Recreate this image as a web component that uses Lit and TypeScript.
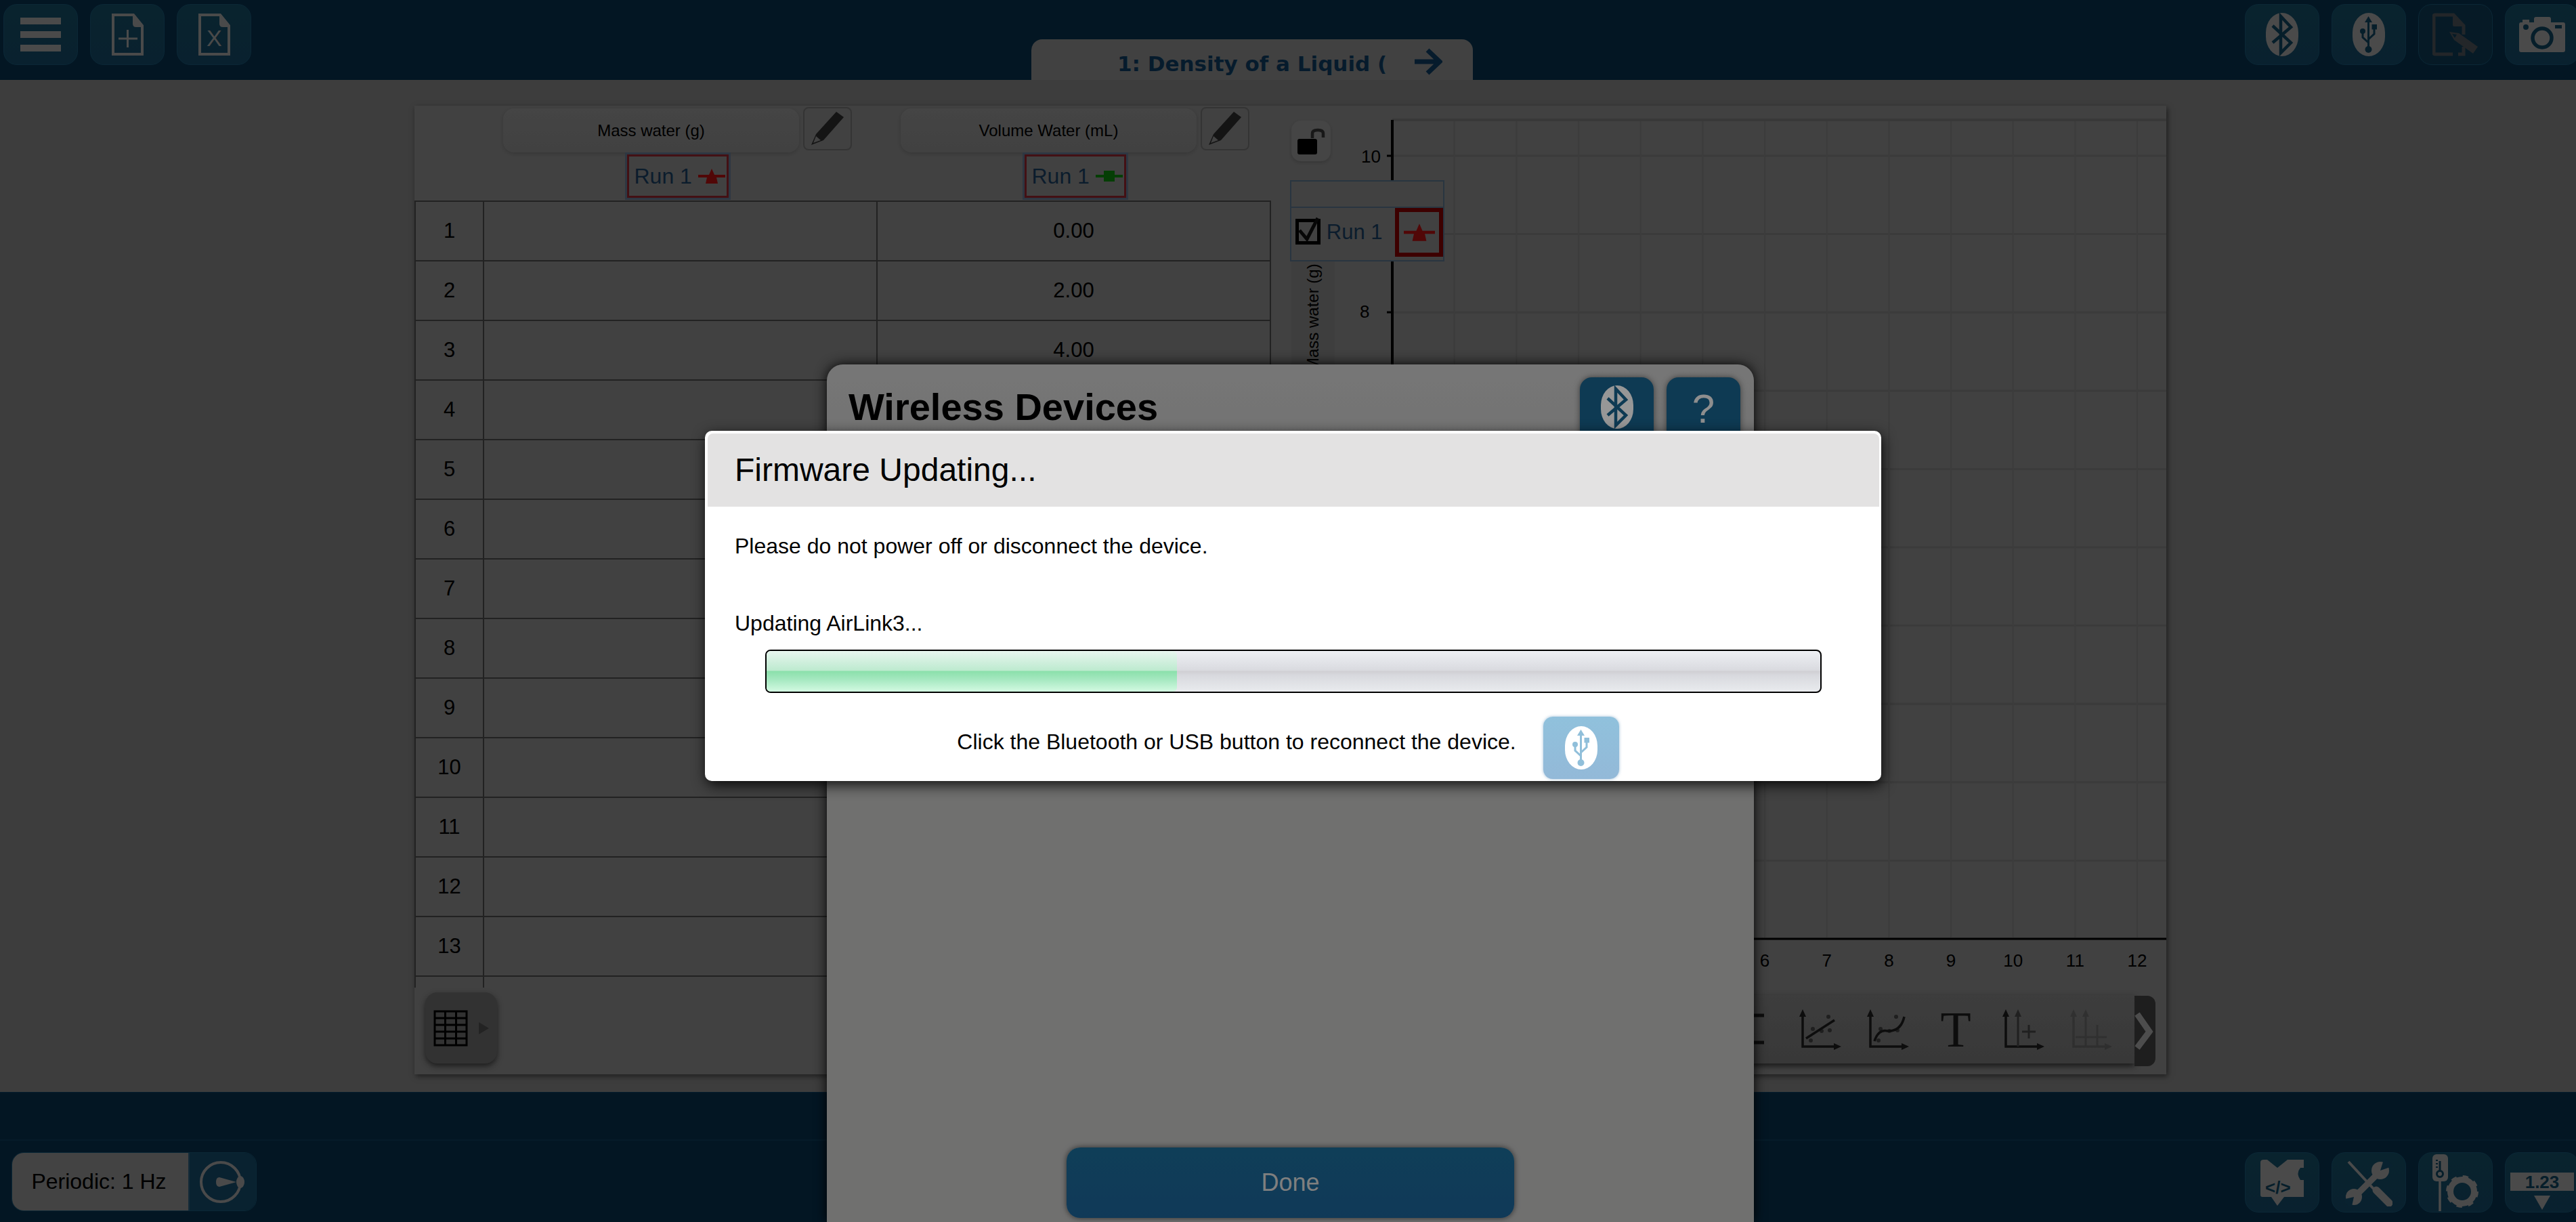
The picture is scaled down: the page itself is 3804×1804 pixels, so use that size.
import { LitElement, html, css, svg } from "lit";
import { customElement } from "lit/decorators.js";

const rows = Array.from({ length: 14 }, (_, i) => i + 1);
const values: Record<number, string> = { 1: "0.00", 2: "2.00", 3: "4.00" };
const LIGHT = "#9a9a9a";
const INK = "#0f3e58";
const BTN = "#144763";

const oval = (fill: string, glyph: unknown) => html`<svg class="oval" viewBox="0 0 48 64"><rect width="48" height="64" rx="24" ry="29" fill=${fill}></rect>${glyph}</svg>`;
const btGlyph = (c: string) => svg`<path d="M10 19 L37 44 L22 59 V5 L37 21 L10 44" fill="none" stroke=${c} stroke-width="4.5"></path>`;
const usbGlyph = (c: string) => svg`<g fill="none" stroke=${c} stroke-width="3"><path d="M23.5 10 V50"></path><path d="M15 29 V36 L23.5 44"></path><path d="M32 22 V31 L23.5 39"></path></g><path d="M23.5 5 L18 14 H29Z" fill=${c}></path><circle cx="23.5" cy="54" r="5" fill=${c}></circle><circle cx="15" cy="27" r="4" fill=${c}></circle><rect x="28.5" y="17" width="7.5" height="7.5" fill=${c}></rect>`;
const docPath = "M2 2 H32 L45 18 V60 H2 Z";
const star = (c: string) => html`<svg class="marker" viewBox="0 0 40 22"><path d="M20 0 L24 9 H40 V13 H27 L29 22 H11 L13 13 H0 V9 H16 Z" fill=${c}></path></svg>`;
const plus = (c: string) => html`<svg class="marker" viewBox="0 0 40 22"><path d="M12 3 H28 V9 H40 V13 H28 V19 H12 V13 H0 V9 H12 Z" fill=${c}></path></svg>`;
const axes = svg`<path d="M5 8 V56 H54" fill="none" stroke="currentColor" stroke-width="3.5"></path><path d="M5 1 L0 12 H10Z M62 56 L51 51 V61Z" fill="currentColor"></path>`;
const dots = svg`<g fill="currentColor" opacity=".6"><circle cx="17" cy="47" r="3"></circle><circle cx="20" cy="30" r="3"></circle><circle cx="33" cy="33" r="3"></circle><circle cx="45" cy="32" r="3"></circle><circle cx="43" cy="12" r="3"></circle></g>`;

@customElement("app-root")
export class AppRoot extends LitElement {
  static styles = css`
    :host { display: block; position: relative; width: 100vw; height: 100vh; overflow: hidden; font-family: "Liberation Sans", Arial, sans-serif; color: #000; }
    .page { display: flex; flex-direction: column; height: 100%; background: #7e7e7e; }
    .topbar { height: 118px; background: #082f4a; display: flex; flex: none; padding-left: 5px; }
    .group { display: flex; gap: 18px; padding-top: 6px; align-items: flex-start; }
    .group.right { margin-left: auto; margin-right: -5px; }
    .btn { box-sizing: border-box; width: 110px; height: 90px; display: flex; align-items: center; justify-content: center; border-radius: 20px; background: linear-gradient(#144a60, #134562); border: 1px solid #175270; }
    .btn.off { background: #0e3750; }
    .oval { width: 48px; height: 64px; display: block; }
    .tab { margin-left: 1152px; margin-top: 58px; width: 652px; height: 60px; box-sizing: border-box; background: #868686; border-radius: 16px 16px 0 0; display: flex; align-items: center; padding: 12px 0 0 127px; gap: 38px; }
    .tab span { width: 400px; overflow: hidden; white-space: nowrap; font: bold 31px "DejaVu Sans", sans-serif; color: #0f3a5c; flex: none; }
    .tab svg { width: 42px; height: 40px; flex: none; margin-top: -6px; }
    .main { flex: 1; min-height: 0; padding: 38px 605px 26px 612px; }
    .panel { display: grid; grid-template-columns: 1265px 1fr; height: 100%; background: #868686; box-shadow: 2px 3px 8px rgba(0,0,0,.5); }
    .left { display: flex; flex-direction: column; min-width: 0; }
    .head { height: 140px; flex: none; display: grid; grid-template-columns: 101px 582px 582px; }
    .col { display: grid; grid-template-columns: 437px 72px; column-gap: 6px; grid-template-rows: 70px 64px; padding-top: 2px; }
    .col.a { padding-left: 30px; }
    .col.b { padding-left: 35px; }
    .name { margin-top: 2px; height: 65px; border-radius: 16px; background: linear-gradient(#8e8e8e, #868686); box-shadow: 0 2px 5px rgba(0,0,0,.16); font-size: 24px; display: flex; align-items: center; justify-content: center; }
    .pen { height: 64px; box-sizing: border-box; border: 2px solid #6c6c6c; border-radius: 8px; }
    .pen svg { width: 68px; height: 60px; display: block; }
    .run { grid-column: 1 / 3; justify-self: center; box-sizing: border-box; width: 150px; height: 64px; border: 3px solid #8c222c; outline: 3px solid #5f7288; display: flex; align-items: center; padding-left: 8px; gap: 9px; font-size: 32px; color: #173c5c; white-space: nowrap; }
    .marker { width: 40px; height: 22px; flex: none; }
    .wrap { height: 1162px; overflow: hidden; flex: none; }
    table { border-collapse: collapse; table-layout: fixed; width: 1265px; font-size: 31px; }
    td { height: 88px; padding: 0; box-sizing: border-box; border: 2px solid #484848; text-align: center; }
    .c0 { width: 101px; }
    .tray { padding: 7px 0 0 16px; }
    .gridbtn { width: 106px; height: 105px; background: #686868; border-radius: 18px; box-shadow: 0 4px 8px rgba(0,0,0,.55); display: flex; align-items: center; padding-left: 12px; box-sizing: border-box; gap: 16px; }
    .gridbtn svg.g { width: 51px; height: 54px; }
    .gridbtn svg.t { width: 15px; height: 18px; }
    .graph { position: relative; overflow: visible; }
    .canvas { position: absolute; inset: 0; width: 100%; height: 100%; }
    .canvas text { font-family: "Liberation Sans", Arial, sans-serif; font-size: 26px; fill: #000; }
    .lock { position: absolute; left: 30px; top: 22px; width: 58px; height: 60px; border-radius: 14px; background: #8e8e8e; box-shadow: 0 2px 4px rgba(0,0,0,.16); }
    .lock svg { width: 58px; height: 60px; display: block; }
    .ylabel { position: absolute; left: 30px; top: 230px; width: 64px; height: 500px; background: #808080; writing-mode: vertical-rl; transform: rotate(180deg); display: flex; align-items: center; justify-content: flex-end; font-size: 24px; box-sizing: border-box; padding-bottom: 3px; white-space: nowrap; }
    .legend { position: absolute; left: 28px; top: 110px; width: 228px; height: 120px; box-sizing: border-box; background: #868686; border: 2px solid #566f85; }
    .legend .top { height: 37px; border-bottom: 2px solid #566f85; }
    .legend .row { display: flex; align-items: flex-start; }
    .check { width: 37px; height: 38px; box-sizing: border-box; border: 5px solid #000; margin: 16px 0 0 6px; position: relative; }
    .check svg { position: absolute; left: -5px; top: -5px; width: 37px; height: 38px; overflow: visible; }
    .legend .lbl { font-size: 31px; color: #173c5c; margin: 18px 0 0 9px; width: 102px; }
    .mbox { width: 71px; height: 72px; box-sizing: border-box; border: 6px solid #7e0000; display: flex; align-items: center; justify-content: center; }
    .mbox .marker { width: 46px; height: 26px; }
    .gtray { position: absolute; right: 47px; top: 1313px; width: 1100px; height: 101px; background: linear-gradient(#7e7e7e, #747474); box-shadow: 0 4px 8px rgba(0,0,0,.6); display: flex; justify-content: flex-end; align-items: center; padding-right: 14px; box-sizing: border-box; color: #1c1c1c; }
    .gtray .ti { width: 100px; display: flex; justify-content: center; }
    .gtray svg { width: 62px; height: 62px; display: block; }
    .gtray .T { font: 74px "Liberation Serif", serif; line-height: 62px; height: 62px; color: #1c1c1c; }
    .gtray .off { opacity: .22; }
    .handle { position: absolute; right: 16px; top: 1314px; width: 31px; height: 104px; background: #3e3e3e; border-radius: 0 12px 12px 0; display: flex; align-items: center; }
    .handle svg { width: 28px; height: 58px; }
    .bottom { height: 192px; flex: none; background: #082f4a; box-sizing: border-box; display: flex; flex-direction: column; border-top: 1px solid #0c3c5c; }
    .sep { height: 69px; flex: none; border-bottom: 2px solid #0e3a56; }
    .brow { display: flex; padding: 17px 0 0 17px; }
    .periodic { display: flex; height: 87px; width: 362px; border-radius: 18px; overflow: hidden; border: 1px solid #175270; box-sizing: border-box; }
    .periodic .t { width: 260px; background: #8a8a8a; font-size: 32px; display: flex; align-items: center; justify-content: center; flex: none; box-sizing: border-box; padding-right: 4px; }
    .periodic .i { flex: 1; background: #144763; display: flex; align-items: center; justify-content: center; border-left: 2px solid #2d5a74; }
    .periodic svg { width: 72px; height: 66px; }
    .bgroup { margin-left: auto; margin-right: -5px; display: flex; gap: 18px; }
    .bgroup .btn { height: 89px; }
    .num svg { margin-top: 26px; }
    .overlay { position: absolute; inset: 0; background: rgba(0,0,0,.3); }
    .wireless { position: absolute; left: 1221px; top: 538px; width: 1369px; height: 1266px; box-sizing: border-box; background: linear-gradient(#aaaaaa, #a1a1a0 200px); border-radius: 24px 24px 0 0; box-shadow: 0 0 18px rgba(0,0,0,.95); display: flex; flex-direction: column; }
    .whead { display: flex; padding: 19px 20px 0 32px; }
    .whead h1 { margin: 13px auto 0 0; font-size: 56px; line-height: 62px; font-weight: bold; }
    .whead .wb { display: flex; gap: 19px; }
    .wbtn { width: 109px; height: 104px; border-radius: 18px; background: #155478; box-shadow: 0 0 8px rgba(0,0,0,.5); display: flex; align-items: flex-start; justify-content: center; padding-top: 12px; box-sizing: border-box; color: #cccccc; font-size: 60px; line-height: 70px; }
    .done { margin: auto auto 6px; width: 661px; height: 104px; border-radius: 20px; background: linear-gradient(#165a7e, #18527e); box-shadow: 0 0 8px rgba(0,0,0,.6); color: #b7b7b7; font-size: 36px; display: flex; align-items: center; justify-content: center; }
    .firmware { position: absolute; left: 1041px; top: 636px; width: 1737px; height: 517px; box-sizing: border-box; background: #fff; border-radius: 10px; box-shadow: 2px 6px 20px rgba(0,0,0,.85); padding: 4px 3px 0 4px; }
    .fhead { height: 108px; background: #e3e2e2; border-radius: 8px 8px 0 0; display: flex; align-items: center; padding-left: 40px; font-size: 48px; box-sizing: border-box; padding-bottom: 2px; }
    .fbody { padding: 38px 0 0 40px; font-size: 32px; line-height: 40px; }
    .fbody .up { margin-top: 74px; }
    .bar { box-sizing: border-box; margin: 19px 0 0 45px; width: 1560px; height: 64px; border: 2.5px solid #000; border-radius: 8px; background: linear-gradient(#eef0f4, #d9dadf 48%, #cfcfd3 50%, #d8d9de 60%, #e9ebee); overflow: hidden; }
    .fill { height: 100%; background: linear-gradient(#e8f6ef, #bdeacf 48%, #8be0ab 50%, #a5e8c0 70%, #d3fae2); border-radius: 0 6px 6px 0; }
    .recon { display: flex; justify-content: center; gap: 40px; margin: 35px 56px 0 0; }
    .recon span { margin-top: 17px; }
    .usb { width: 112px; height: 92px; border-radius: 14px; background: linear-gradient(#90c1dc, #93b9d8); box-shadow: 0 0 4px rgba(100,150,190,.6); display: flex; align-items: center; justify-content: center; }
  `;

  private grid() {
    const xs = Array.from({ length: 12 }, (_, i) => 2056 + (i + 1) * 91.67);
    const ys = Array.from({ length: 11 }, (_, i) => 230 + i * 115.6);
    return html`<svg class="canvas" viewBox="1877 156 1322 1430">
      ${ys.map((y) => svg`<line x1="2056" x2="3199" y1=${y} y2=${y} stroke="#7a7a7a" stroke-width="3"></line>`)}
      ${xs.map((x) => svg`<line x1=${x} x2=${x} y1="177" y2="1387" stroke="#7c7c7c" stroke-width="2"></line>`)}
      <line x1="2056" x2="3199" y1="177" y2="177" stroke="#747474" stroke-width="4"></line>
      <line x1="2056" x2="2056" y1="177" y2="1387" stroke="#000" stroke-width="4"></line>
      <line x1="2048" x2="3199" y1="1386" y2="1386" stroke="#000" stroke-width="3"></line>
      <line x1="2048" x2="2056" y1="230" y2="230" stroke="#000" stroke-width="3"></line>
      <line x1="2048" x2="2056" y1="461" y2="461" stroke="#000" stroke-width="3"></line>
      <text x="2010" y="240">10</text><text x="2008" y="469">8</text>
      ${[6, 7, 8, 9, 10, 11, 12].map((n) => svg`<text x=${2056 + n * 91.67} y="1427" text-anchor="middle">${n}</text>`)}
    </svg>`;
  }

  render() {
    return html`
      <div class="page">
        <div class="topbar">
          <div class="group">
            <div class="btn"><svg width="60" height="50" viewBox="0 0 60 50"><path d="M0 0H60V10H0Z M0 20H60V30H0Z M0 40H60V50H0Z" fill=${LIGHT}></path></svg></div>
            <div class="btn"><svg width="47" height="62" viewBox="0 0 47 62"><path d=${docPath} fill="none" stroke=${LIGHT} stroke-width="4"></path><path d="M31 2 H34 L45 16 V20 H36 Q31 20 31 15Z" fill=${LIGHT}></path><path d="M23.5 24 V50 M10 37 H38" stroke=${LIGHT} stroke-width="3"></path></svg></div>
            <div class="btn"><svg width="47" height="62" viewBox="0 0 47 62"><path d=${docPath} fill="none" stroke=${LIGHT} stroke-width="4"></path><path d="M31 2 H34 L45 16 V20 H36 Q31 20 31 15Z" fill=${LIGHT}></path><text x="12" y="48" font-family="Liberation Sans" font-size="34" fill=${LIGHT}>X</text></svg></div>
          </div>
          <div class="tab"><span>1: Density of a Liquid (</span><svg viewBox="0 0 42 40"><path d="M1 20 H36 M20 3 L38 20 L20 37" fill="none" stroke="#0f3a5c" stroke-width="7"></path></svg></div>
          <div class="group right">
            <div class="btn">${oval(LIGHT, btGlyph(INK))}</div>
            <div class="btn">${oval(LIGHT, usbGlyph(INK))}</div>
            <div class="btn off"><svg width="68" height="64" viewBox="0 0 68 64"><path d="M30 61 H4 Q2 61 2 59 V5 Q2 3 4 3 H31 L46 19 V32 M46 50 V61 H38" fill="none" stroke="#4a5055" stroke-width="5"></path><path d="M30 3 H33 L46 17 V20 H32 Q30 20 30 18Z" fill="#4a5055"></path><path d="M25 28 L39 30 L67 50 L60 60 L32 40 Z" fill="#4a5055"></path><path d="M29 31 L36 32 L33 37 Z" fill="#0e3750"></path></svg></div>
            <div class="btn"><svg width="68" height="52" viewBox="0 0 68 52"><path d="M0 11 Q0 8 3 8 H5 V4 H15 V8 H22 V3 Q22 0 25 0 H44 Q47 0 47 3 V8 H65 Q68 8 68 11 V49 Q68 52 65 52 H3 Q0 52 0 49 Z" fill=${LIGHT}></path><circle cx="34" cy="31" r="14" fill=${LIGHT} stroke=${INK} stroke-width="5.5"></circle><rect x="53" y="12" width="10" height="5" fill=${INK}></rect><circle cx="10" cy="15" r="4" fill=${INK}></circle></svg></div>
          </div>
        </div>

        <div class="main">
          <div class="panel">
            <div class="left">
              <div class="head">
                <div></div>
                ${[["a", "Mass water (g)", star("#a81010")], ["b", "Volume Water (mL)", plus("#0c800c")]].map(
                  ([k, n, m]) => html`<div class="col ${k}">
                    <div class="name">${n}</div>
                    <div class="pen"><svg viewBox="0 0 68 60"><path d="M47 5 L58 13 L28 47 L10 54 L17 38 Z" fill="#2a2a2a"></path><path d="M17 41 L24 47 L13 51 Z" fill="#888"></path></svg></div>
                    <div class="run">Run 1 ${m}</div>
                  </div>`
                )}
              </div>
              <div class="wrap">
                <table>
                  ${rows.map((r) => html`<tr><td class="c0">${r < 14 ? r : ""}</td><td></td><td>${values[r] ?? ""}</td></tr>`)}
                </table>
              </div>
              <div class="tray">
                <div class="gridbtn">
                  <svg class="g" viewBox="0 0 51 54"><path d="M2 2H49V52H2Z M17.5 2V52 M33.5 2V52 M2 12H49 M2 22H49 M2 32H49 M2 42H49" fill="none" stroke="#000" stroke-width="3"></path></svg>
                  <svg class="t" viewBox="0 0 15 18"><path d="M0 0 L15 9 L0 18Z" fill="#4a4a4a"></path></svg>
                </div>
              </div>
            </div>

            <div class="graph">
              ${this.grid()}
              <div class="ylabel">Mass water (g)</div>
              <div class="lock"><svg viewBox="0 0 58 60"><rect x="9" y="27" width="29" height="23" rx="3" fill="#000"></rect><path d="M31 26 V19 Q31 14 39 14 Q47 14 47 19 V25" fill="none" stroke="#333" stroke-width="4.5"></path></svg></div>
              <div class="legend">
                <div class="top"></div>
                <div class="row">
                  <div class="check"><svg viewBox="0 0 37 38"><path d="M6 17 L17 30 L33 -1" fill="none" stroke="#111" stroke-width="5"></path></svg></div>
                  <div class="lbl">Run 1</div>
                  <div class="mbox">${star("#a81010")}</div>
                </div>
              </div>
              <div class="gtray">
                <div class="ti"><svg viewBox="0 0 62 62"><path d="M12 10 H48 M12 50 H48 M14 10 V50" fill="none" stroke="currentColor" stroke-width="5"></path></svg></div>
                <div class="ti"><svg viewBox="0 0 62 62">${axes}${dots}<path d="M10 44 L52 17" stroke="currentColor" stroke-width="3.5"></path></svg></div>
                <div class="ti"><svg viewBox="0 0 62 62">${axes}${dots}<path d="M11 48 Q17 30 30 33 Q50 34 55 12" fill="none" stroke="currentColor" stroke-width="3.5"></path></svg></div>
                <div class="ti"><div class="T">T</div></div>
                <div class="ti"><svg viewBox="0 0 62 62">${axes}<path d="M23 10 V56" stroke="#444" stroke-width="3"></path><path d="M23 1 L18 12 H28Z" fill="#444"></path><path d="M39 24 V44 M29 34 H49" stroke="#444" stroke-width="3"></path></svg></div>
                <div class="ti off"><svg viewBox="0 0 62 62">${axes}<path d="M23 10 V56 M40 24 V56 M8 42 H54" stroke="currentColor" stroke-width="3"></path><path d="M23 1 L18 12 H28Z" fill="currentColor"></path></svg></div>
              </div>
              <div class="handle"><svg viewBox="0 0 28 58"><path d="M4 4 L22 30 L4 54" fill="none" stroke="#a0a0a0" stroke-width="9"></path></svg></div>
            </div>
          </div>
        </div>

        <div class="bottom">
          <div class="sep"></div>
          <div class="brow">
            <div class="periodic">
              <div class="t">Periodic: 1 Hz</div>
              <div class="i"><svg viewBox="0 0 72 66"><circle cx="33" cy="33" r="29" fill="none" stroke=${LIGHT} stroke-width="4"></circle><ellipse cx="62" cy="33" rx="6" ry="9" fill=${LIGHT}></ellipse><path d="M26 33 Q26 26 31 26 L56 33 L31 40 Q26 40 26 33Z" fill=${LIGHT}></path></svg></div>
            </div>
            <div class="bgroup">
              <div class="btn"><svg width="64" height="68" viewBox="0 0 64 68"><path d="M0 4 Q0 0 5 0 H10 L25 12 L40 0 H64 V12 H59 Q52 20 59 30 H64 V55 H35 L25 68 L16 55 H3 Q0 55 0 52 Z" fill=${LIGHT}></path><text x="7" y="50" font-family="Liberation Sans" font-size="26" font-weight="bold" fill=${INK}>&lt;/&gt;</text></svg></div>
              <div class="btn"><svg width="70" height="70" viewBox="0 0 70 70"><path d="M5 4 L42 44" stroke=${LIGHT} stroke-width="4"></path><path d="M46 46 L65 65" stroke=${LIGHT} stroke-width="11" stroke-linecap="round"></path><path d="M48 22 L11 59" stroke=${LIGHT} stroke-width="9"></path><circle cx="52" cy="17" r="13" fill=${LIGHT}></circle><path d="M52 17 L58 -2 L72 10 Z" fill=${BTN}></path><circle cx="13" cy="56" r="12" fill=${LIGHT}></circle><path d="M13 56 L-4 60 L9 74 Z" fill=${BTN}></path></svg></div>
              <div class="btn"><svg width="68" height="84" viewBox="0 0 68 84"><rect x="0" y="0" width="23" height="40" rx="6" fill=${LIGHT}></rect><path d="M11 10 V24" stroke=${INK} stroke-width="3"></path><circle cx="11" cy="29" r="4.5" fill="none" stroke=${INK} stroke-width="3"></circle><path d="M5 9 h3 M5 14 h3 M5 19 h3" stroke=${INK} stroke-width="2"></path><path d="M11 40 V84" stroke=${LIGHT} stroke-width="3.5"></path><circle cx="44" cy="55" r="17.5" fill="none" stroke=${LIGHT} stroke-width="9"></circle><circle cx="44" cy="55" r="21.5" fill="none" stroke=${LIGHT} stroke-width="5" stroke-dasharray="8 8.9"></circle></svg></div>
              <div class="btn num"><svg width="94" height="55" viewBox="0 0 94 55"><rect width="94" height="27" fill=${LIGHT}></rect><text x="47" y="23" text-anchor="middle" font-family="Liberation Sans" font-size="26" font-weight="bold" fill=${INK}>1.23</text><path d="M35 34 H59 L47 55Z" fill=${LIGHT}></path></svg></div>
            </div>
          </div>
        </div>
      </div>

      <div class="overlay"></div>
      <div class="wireless">
        <div class="whead">
          <h1>Wireless Devices</h1>
          <div class="wb">
            <div class="wbtn">${oval("#d8d8d8", btGlyph("#155478"))}</div>
            <div class="wbtn">?</div>
          </div>
        </div>
        <div class="done">Done</div>
      </div>
      <div class="overlay"></div>
      <div class="firmware">
        <div class="fhead">Firmware Updating...</div>
        <div class="fbody">
          <div>Please do not power off or disconnect the device.</div>
          <div class="up">Updating AirLink3...</div>
          <div class="bar"><div class="fill" style="width: ${(606 / 1555) * 100}%"></div></div>
          <div class="recon">
            <span>Click the Bluetooth or USB button to reconnect the device.</span>
            <div class="usb">${oval("#ffffff", usbGlyph("#90bfda"))}</div>
          </div>
        </div>
      </div>
    `;
  }
}
